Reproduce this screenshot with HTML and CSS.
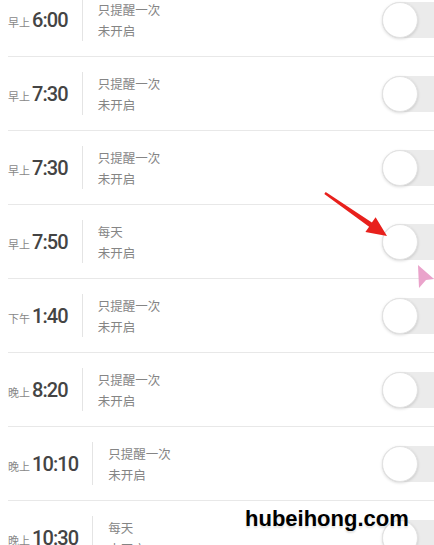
FILE: index.html
```html
<!DOCTYPE html>
<html lang="zh-CN">
<head>
    <meta charset="UTF-8">
    <meta name="viewport" content="width=device-width, initial-scale=1.0">
    <title>闹钟</title>
    <link rel="stylesheet" href="styles.css">
</head>
<body>
    <div class="alarm-list">
        <div class="alarm">
            <div class="time"><span class="period">早上</span><span class="clock">6:00</span></div>
            <div class="divider"></div>
            <div class="info"><p>只提醒一次</p><p>未开启</p></div>
            <div class="switch"><span class="knob"></span></div>
        </div>
        <div class="alarm">
            <div class="time"><span class="period">早上</span><span class="clock">7:30</span></div>
            <div class="divider"></div>
            <div class="info"><p>只提醒一次</p><p>未开启</p></div>
            <div class="switch"><span class="knob"></span></div>
        </div>
        <div class="alarm">
            <div class="time"><span class="period">早上</span><span class="clock">7:30</span></div>
            <div class="divider"></div>
            <div class="info"><p>只提醒一次</p><p>未开启</p></div>
            <div class="switch"><span class="knob"></span></div>
        </div>
        <div class="alarm">
            <div class="time"><span class="period">早上</span><span class="clock">7:50</span></div>
            <div class="divider"></div>
            <div class="info"><p>每天</p><p>未开启</p></div>
            <div class="switch"><span class="knob"></span></div>
        </div>
        <div class="alarm">
            <div class="time"><span class="period">下午</span><span class="clock">1:40</span></div>
            <div class="divider"></div>
            <div class="info"><p>只提醒一次</p><p>未开启</p></div>
            <div class="switch"><span class="knob"></span></div>
        </div>
        <div class="alarm">
            <div class="time"><span class="period">晚上</span><span class="clock">8:20</span></div>
            <div class="divider"></div>
            <div class="info"><p>只提醒一次</p><p>未开启</p></div>
            <div class="switch"><span class="knob"></span></div>
        </div>
        <div class="alarm">
            <div class="time"><span class="period">晚上</span><span class="clock">10:10</span></div>
            <div class="divider"></div>
            <div class="info"><p>只提醒一次</p><p>未开启</p></div>
            <div class="switch"><span class="knob"></span></div>
        </div>
        <div class="alarm">
            <div class="time"><span class="period">晚上</span><span class="clock">10:30</span></div>
            <div class="divider"></div>
            <div class="info"><p>每天</p><p>未开启</p></div>
            <div class="switch"><span class="knob"></span></div>
        </div>
    </div>

    <!-- annotations drawn over the screenshot -->
    <svg class="marks" width="434" height="545" viewBox="0 0 434 545">
        <polygon fill="#e8201c" points="325.7,192 371.9,222.6 375.6,217.3 387,236 365.4,232.1 369.1,226.8 324.3,194"/>
        <polygon fill="#eaa3cb" points="418,265 434,279 426,280 419,288"/>
    </svg>
    <div class="watermark">hubeihong.com</div>
</body>
</html>
```

FILE: styles.css
```css
body {
    margin: 0;
    background-color: #fff;
    font-family: 'Noto Sans CJK SC', 'Roboto', sans-serif;
    width: 434px;
    height: 545px;
    overflow: hidden;
    position: relative;
}

.alarm-list {
    margin-top: -17px;
}

.alarm {
    display: flex;
    align-items: center;
    height: 73px;
    margin-left: 8px;
    border-bottom: 1px solid #e8e8e8;
}

.time {
    display: flex;
    align-items: baseline;
    color: #444;
}

.period {
    font-size: 11px;
    color: #888;
    margin-right: 2px;
}

.clock {
    font-family: 'Roboto', sans-serif;
    font-weight: 500;
    font-size: 20px;
    letter-spacing: -0.9px;
}

.divider {
    width: 1px;
    height: 43px;
    background-color: #e4e4e4;
    margin: 0 15px 0 14px;
}

.info p {
    margin: 0;
    font-size: 12.5px;
    line-height: 21px;
    color: #858585;
}

.switch {
    margin-left: auto;
    margin-right: -18px;
    width: 70px;
    height: 36px;
    border-radius: 18px;
    background-color: #ebebeb;
    display: flex;
    align-items: center;
}

.knob {
    width: 34px;
    height: 34px;
    border-radius: 50%;
    background-color: #fff;
    border: 1px solid #e2e2e2;
    box-shadow: 0 1px 3px rgba(0, 0, 0, 0.15);
}

.marks {
    position: absolute;
    left: 0;
    top: 0;
}

.watermark {
    position: absolute;
    left: 245px;
    top: 506px;
    font-family: 'Liberation Sans', sans-serif;
    font-weight: bold;
    font-size: 22px;
    color: #000;
    text-shadow: 0 2px 2px rgba(0, 0, 0, 0.12);
}
```
